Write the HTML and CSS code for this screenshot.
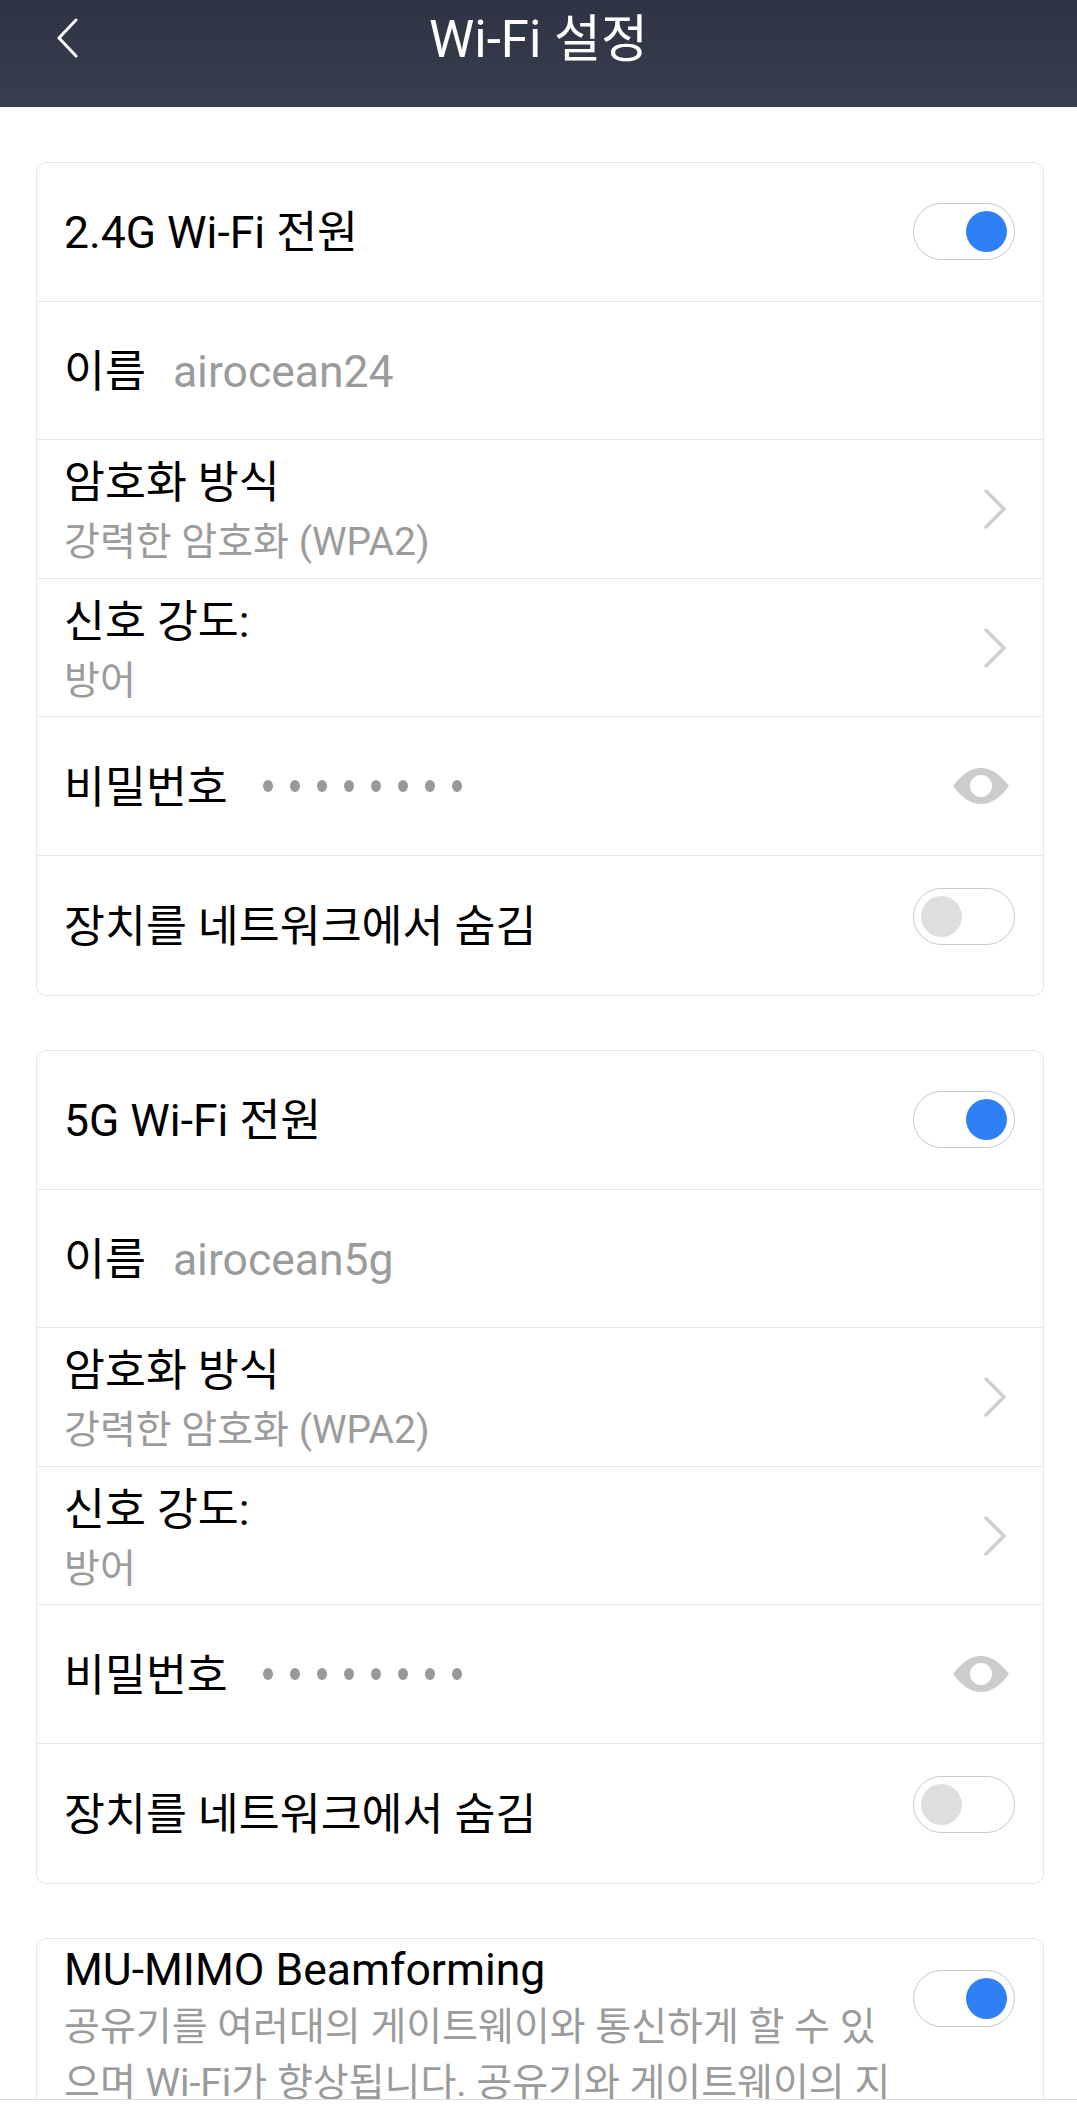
FILE: index.html
```html
<!DOCTYPE html>
<html lang="ko">
<head>
  <meta charset="UTF-8">
  <title>Wi-Fi 설정</title>
  <link rel="stylesheet" href="styles.css">
</head>
<body>
  <div class="page">
    <header class="topbar">
      <svg class="back-icon" viewBox="0 0 22 40"><path d="M20 2 L3 20 L20 38" /></svg>
      <h1>Wi-Fi 설정</h1>
    </header>

    <main class="content">
      <!-- 2.4G -->
      <section class="card">
        <div class="row">
          <span class="label">2.4G Wi-Fi 전원</span>
          <span class="toggle on"><i></i></span>
        </div>
        <div class="row">
          <span class="label">이름</span>
          <span class="value">airocean24</span>
        </div>
        <div class="row">
          <div class="stack">
            <span class="label">암호화 방식</span>
            <span class="sub">강력한 암호화 (WPA2)</span>
          </div>
          <svg class="chevron" viewBox="0 0 24 42"><path d="M3 3 L21 21 L3 39" /></svg>
        </div>
        <div class="row">
          <div class="stack">
            <span class="label">신호 강도:</span>
            <span class="sub">방어</span>
          </div>
          <svg class="chevron" viewBox="0 0 24 42"><path d="M3 3 L21 21 L3 39" /></svg>
        </div>
        <div class="row">
          <span class="label">비밀번호</span>
          <span class="dots"><i></i><i></i><i></i><i></i><i></i><i></i><i></i><i></i></span>
          <svg class="eye" viewBox="0 0 56 36"><path fill-rule="evenodd" d="M0 18 C9 6 18 0 28 0 C38 0 47 6 56 18 C47 30 38 36 28 36 C18 36 9 30 0 18 Z M28 7 A11 11 0 1 0 28 29 A11 11 0 1 0 28 7 Z" /></svg>
        </div>
        <div class="row">
          <span class="label">장치를 네트워크에서 숨김</span>
          <span class="toggle"><i></i></span>
        </div>
      </section>

      <!-- 5G -->
      <section class="card">
        <div class="row">
          <span class="label">5G Wi-Fi 전원</span>
          <span class="toggle on"><i></i></span>
        </div>
        <div class="row">
          <span class="label">이름</span>
          <span class="value">airocean5g</span>
        </div>
        <div class="row">
          <div class="stack">
            <span class="label">암호화 방식</span>
            <span class="sub">강력한 암호화 (WPA2)</span>
          </div>
          <svg class="chevron" viewBox="0 0 24 42"><path d="M3 3 L21 21 L3 39" /></svg>
        </div>
        <div class="row">
          <div class="stack">
            <span class="label">신호 강도:</span>
            <span class="sub">방어</span>
          </div>
          <svg class="chevron" viewBox="0 0 24 42"><path d="M3 3 L21 21 L3 39" /></svg>
        </div>
        <div class="row">
          <span class="label">비밀번호</span>
          <span class="dots"><i></i><i></i><i></i><i></i><i></i><i></i><i></i><i></i></span>
          <svg class="eye" viewBox="0 0 56 36"><path fill-rule="evenodd" d="M0 18 C9 6 18 0 28 0 C38 0 47 6 56 18 C47 30 38 36 28 36 C18 36 9 30 0 18 Z M28 7 A11 11 0 1 0 28 29 A11 11 0 1 0 28 7 Z" /></svg>
        </div>
        <div class="row">
          <span class="label">장치를 네트워크에서 숨김</span>
          <span class="toggle"><i></i></span>
        </div>
      </section>

      <!-- MU-MIMO, cut off by the bottom edge -->
      <section class="card">
        <div class="row row-long">
          <div class="stack long">
            <span class="label">MU-MIMO Beamforming</span>
            <span class="sub">공유기를 여러대의 게이트웨이와 통신하게 할 수 있으며 Wi-Fi가 향상됩니다. 공유기와 게이트웨이의 지원이 필요합니다.</span>
          </div>
          <span class="toggle on"><i></i></span>
        </div>
      </section>
    </main>

    <div class="bottom-edge"></div>
  </div>
</body>
</html>
```

FILE: styles.css
```css
* {
  box-sizing: border-box;
  margin: 0;
  padding: 0;
}
body {
  font-family: Roboto, "Noto Sans CJK KR", sans-serif;
  background-color: #fff;
  color: #000;
}

.page {
  display: flex;
  flex-direction: column;
  height: 2110px;
  overflow: hidden;
}

/* Top bar */
.topbar {
  flex: none;
  display: flex;
  justify-content: center;
  height: 107px;
  padding-top: 10px;
  background: linear-gradient(#2f3444, #393e4e);
  color: #fff;
}
.topbar h1 {
  font-size: 51px;
  font-weight: 400;
  line-height: 60px;
}
.back-icon {
  position: absolute;
  left: 56px;
  top: 18px;
  width: 22px;
  height: 40px;
  fill: none;
  stroke: #fff;
  stroke-width: 3;
  stroke-linecap: round;
  stroke-linejoin: round;
}

/* Cards */
.content {
  flex: 1;
  min-height: 0;
  overflow: hidden;
  padding: 55px 33px 0 36px;
}
.card {
  border: 1px solid #e6e6e6;
  border-radius: 10px;
  margin-bottom: 54.4px;
}
.row {
  display: flex;
  align-items: center;
  height: 138.6px;
  padding: 0 28px 0 27px;
  border-bottom: 1px solid #e6e6e6;
}
.row:last-child {
  border-bottom: none;
}
.row:last-child .toggle {
  margin-bottom: 17px;
}
.row-long {
  align-items: flex-start;
  height: auto;
  padding-top: 5px;
}

.label {
  font-size: 44.5px;
  line-height: 52px;
}
.row > .label,
.value {
  padding-top: 3px;
}
.value {
  margin-left: 27px;
  font-size: 44.5px;
  color: #9b9b9b;
}
.sub {
  margin-top: 8px;
  font-size: 39px;
  line-height: 50px;
  color: #9b9b9b;
}
.stack {
  display: flex;
  flex-direction: column;
  padding-top: 7px;
}
.stack.long {
  width: 830px;
  padding-top: 0;
}
.long .sub {
  margin-top: 3px;
  line-height: 56px;
}

/* Right side controls */
.toggle {
  flex: none;
  position: relative;
  margin-left: auto;
  width: 102px;
  height: 57px;
  border: 1px solid #c8c8c8;
  border-radius: 29px;
}
.toggle i {
  position: absolute;
  left: 7px;
  top: 7px;
  width: 41px;
  height: 41px;
  border-radius: 50%;
  background-color: #dedede;
}
.toggle.on i {
  left: 52px;
  background-color: #2f7ff5;
}
.row-long .toggle {
  margin-top: 26px;
}

.chevron {
  flex: none;
  margin-left: auto;
  margin-right: 8px;
  width: 24px;
  height: 42px;
  fill: none;
  stroke: #cfcfcf;
  stroke-width: 3.5;
  stroke-linecap: round;
  stroke-linejoin: round;
}
.eye {
  flex: none;
  margin-left: auto;
  margin-right: 6px;
  width: 56px;
  height: 36px;
  fill: #cccccc;
}

.dots {
  display: flex;
  gap: 17px;
  margin-left: 35px;
}
.dots i {
  width: 10px;
  height: 12px;
  border-radius: 50%;
  background-color: #999;
}

.bottom-edge {
  flex: none;
  height: 11px;
  border-top: 1px solid #dedede;
  background-color: #fff;
}
```
